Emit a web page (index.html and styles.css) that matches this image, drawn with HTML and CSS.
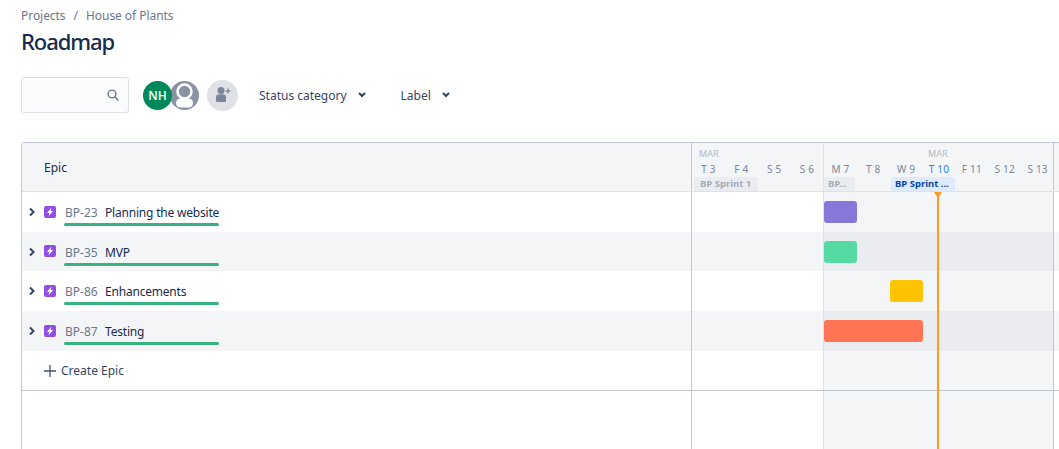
FILE: index.html
```html
<!DOCTYPE html>
<html>
	<head>
		<title>Roadmap</title>
		<link rel="stylesheet" href="styles.css">
	</head>
	<body>
		<div class="crumbs"><span>Projects</span><span class="slash">/</span><span>House of Plants</span></div>
		<h1>Roadmap</h1>
		<div class="toolbar">
			<div class="search">
				<svg width="16" height="16" viewBox="0 0 16 16"><circle cx="7" cy="7" r="3.9" fill="none" stroke="#6b778c" stroke-width="1.4"/><path d="M10 10l3 3" stroke="#6b778c" stroke-width="1.5" stroke-linecap="round"/></svg>
			</div>
			<div class="avatars">
				<div class="avatar nh">NH</div>
				<div class="avatar anon">
					<svg width="29" height="29" viewBox="0 0 29 29"><circle cx="14.5" cy="10.500" r="7" fill="none" stroke="#fff" stroke-width="2.500"/><path d="M6 22c0-3 2-4.500 4.500-4.500h8c2.500 0 4.500 1.500 4.500 4.500 0 3-2 4.500-4.500 4.500h-8C8 26.500 6 25 6 22z" fill="#fff"/></svg>
				</div>
			</div>
			<div class="avatar add">
				<svg width="20" height="20" viewBox="0 0 20 20"><circle cx="8" cy="5.500" r="3.500" fill="#7a869a"/><path d="M3 12c0-1.700 1.200-2.700 2.800-2.700h4.400c1.600 0 2.800 1 2.800 2.700v3.500c0 1-.8 1.500-1.700 1.500H4.700C3.800 17 3 16.500 3 15.500z" fill="#7a869a"/><path d="M15 3.500v5M12.500 6h5" stroke="#7a869a" stroke-width="1.300"/></svg>
			</div>
			<div class="filter first">Status category<svg width="10" height="8" viewBox="0 0 10 8"><path d="M2 2l3 3 3-3" fill="none" stroke="#344563" stroke-width="2"/></svg></div>
			<div class="filter">Label<svg width="10" height="8" viewBox="0 0 10 8"><path d="M2 2l3 3 3-3" fill="none" stroke="#344563" stroke-width="2"/></svg></div>
		</div>

		<div class="roadmap">
			<div class="row head">
				<div class="label">Epic</div>
				<div class="wk past">
					<div class="month">MAR</div>
					<div class="days"><span>T 3</span><span>F 4</span><span>S 5</span><span>S 6</span></div>
					<div class="sprints"><span class="sprint s1">BP Sprint 1</span></div>
				</div>
				<div class="wk now">
					<div class="month center">MAR</div>
					<div class="days"><span>M 7</span><span>T 8</span><span>W 9</span><span class="today">T 10</span><span>F 11</span><span>S 12</span><span>S 13</span></div>
					<div class="sprints"><span class="sprint s2">BP...</span><span class="sprint s3">BP Sprint ...</span></div>
				</div>
				<div class="wk next"></div>
			</div>

			<div class="row epic">
				<div class="label">
					<svg class="caret" width="8" height="10" viewBox="0 0 8 10"><path d="M2 1.500L5.500 5 2 8.500" fill="none" stroke="#344563" stroke-width="2"/></svg>
					<svg class="type" width="12" height="12" viewBox="0 0 12 12"><rect width="12" height="12" rx="2" fill="#904ee2"/><path d="M7.500 1.500L3 7h2.500l-1 3.500L9 5H6.500z" fill="#fff"/></svg>
					<div class="issue"><div class="names"><span class="key">BP-23</span><span>Planning the website</span></div><div class="progress"></div></div>
				</div>
				<div class="wk past"></div>
				<div class="wk now"><div class="bar purple"></div></div>
				<div class="wk next"></div>
			</div>
			<div class="row epic alt short">
				<div class="label">
					<svg class="caret" width="8" height="10" viewBox="0 0 8 10"><path d="M2 1.500L5.500 5 2 8.500" fill="none" stroke="#344563" stroke-width="2"/></svg>
					<svg class="type" width="12" height="12" viewBox="0 0 12 12"><rect width="12" height="12" rx="2" fill="#904ee2"/><path d="M7.500 1.500L3 7h2.500l-1 3.500L9 5H6.500z" fill="#fff"/></svg>
					<div class="issue"><div class="names"><span class="key">BP-35</span><span>MVP</span></div><div class="progress"></div></div>
				</div>
				<div class="wk past"></div>
				<div class="wk now"><div class="bar green"></div></div>
				<div class="wk next"></div>
			</div>
			<div class="row epic">
				<div class="label">
					<svg class="caret" width="8" height="10" viewBox="0 0 8 10"><path d="M2 1.500L5.500 5 2 8.500" fill="none" stroke="#344563" stroke-width="2"/></svg>
					<svg class="type" width="12" height="12" viewBox="0 0 12 12"><rect width="12" height="12" rx="2" fill="#904ee2"/><path d="M7.500 1.500L3 7h2.500l-1 3.500L9 5H6.500z" fill="#fff"/></svg>
					<div class="issue"><div class="names"><span class="key">BP-86</span><span>Enhancements</span></div><div class="progress"></div></div>
				</div>
				<div class="wk past"></div>
				<div class="wk now"><div class="bar yellow"></div></div>
				<div class="wk next"></div>
			</div>
			<div class="row epic alt">
				<div class="label">
					<svg class="caret" width="8" height="10" viewBox="0 0 8 10"><path d="M2 1.500L5.500 5 2 8.500" fill="none" stroke="#344563" stroke-width="2"/></svg>
					<svg class="type" width="12" height="12" viewBox="0 0 12 12"><rect width="12" height="12" rx="2" fill="#904ee2"/><path d="M7.500 1.500L3 7h2.500l-1 3.500L9 5H6.500z" fill="#fff"/></svg>
					<div class="issue"><div class="names"><span class="key">BP-87</span><span>Testing</span></div><div class="progress"></div></div>
				</div>
				<div class="wk past"></div>
				<div class="wk now"><div class="bar red"></div></div>
				<div class="wk next"></div>
			</div>

			<div class="row create">
				<div class="label">
					<svg width="12" height="12" viewBox="0 0 12 12"><path d="M6 0v12M0 6h12" stroke="#42526e" stroke-width="1.300"/></svg>
					<span>Create Epic</span>
				</div>
				<div class="wk past"></div>
				<div class="wk now"></div>
				<div class="wk next"></div>
			</div>
			<div class="row rest">
				<div class="label"></div>
				<div class="wk past"></div>
				<div class="wk now"></div>
				<div class="wk next"></div>
			</div>

			<div class="todayline"></div>
		</div>
	</body>
</html>
```

FILE: styles.css
```css
* {
	box-sizing: border-box;
}
html,body {
	width: 100%;
	height: 100%;
	overflow: hidden;
}
body {
	margin: 0;
	padding: 8px 0 0 21px;
	background-color: #fff;
	color: #172b4d;
	font-family: "Noto Sans", sans-serif;
	font-size: 12px;
}
.crumbs {
	display: flex;
	height: 16px;
	line-height: 16px;
	color: #6b778c;
	font-size: 12px;
	letter-spacing: -.05px;
}
.slash {
	margin: 0 8px;
}
h1 {
	margin: 1px 0 0;
	height: 32px;
	line-height: 32px;
	font-size: 22px;
	font-weight: 500;
	letter-spacing: -1.1px;
	color: #172b4d;
}
.toolbar {
	display: flex;
	align-items: center;
	margin-top: 20px;
	height: 36px;
}
.search {
	display: flex;
	align-items: center;
	justify-content: flex-end;
	width: 108px;
	height: 36px;
	padding-right: 7px;
	background-color: #fafbfc;
	border: 1px solid #dfe1e6;
	border-radius: 3px;
}
.avatars {
	display: flex;
	margin-left: 14px;
}
.avatar {
	display: flex;
	align-items: center;
	justify-content: center;
	width: 29px;
	height: 29px;
	border-radius: 50%;
}
.nh {
	position: relative;
	background-color: #00875a;
	color: #e3fcef;
	font-size: 12px;
	font-weight: 600;
}
.anon {
	margin-left: -2px;
	background-color: #8993a4;
	overflow: hidden;
}
.add {
	width: 31px;
	height: 31px;
	margin-left: 8px;
	background-color: #dfe1e6;
}
.filter {
	display: flex;
	align-items: center;
	color: #344563;
	font-size: 12px;
	margin-left: 34px;
}
.filter.first {
	margin-left: 21px;
}
.filter svg {
	margin-left: 10px;
}

.roadmap {
	position: relative;
	margin-top: 29px;
	width: 1038px;
	border-top: 1px solid #c1c7d0;
	border-left: 1px solid #c1c7d0;
	border-top-left-radius: 3px;
}
.row {
	display: flex;
	height: 40px;
}
.row.short {
	height: 39px;
}
.label {
	flex: none;
	display: flex;
	align-items: center;
	width: 670px;
	border-right: 1px solid #c1c7d0;
}
.wk {
	flex: none;
}
.past {
	width: 131px;
}
.now {
	width: 231px;
	background-color: #f4f5f7;
	border-left: 1px solid #dfe1e6;
	border-right: 1px solid #c1c7d0;
}
.next {
	flex: 1;
}

.head {
	height: 49px;
	background-color: #f4f5f7;
	border-bottom: 1px solid #dfe1e6;
}
.head .label {
	padding-left: 22px;
	font-size: 12px;
	color: #172b4d;
}
.head .wk {
	padding-top: 5px;
	background-color: #f4f5f7;
}
.month {
	height: 12px;
	line-height: 12px;
	padding-left: 7px;
	font-size: 9px;
	color: #b3bac5;
}
.month.center {
	padding-left: 104px;
}
.days {
	display: flex;
	height: 16px;
	line-height: 16px;
	margin-top: 1px;
	font-size: 10px;
	color: #7a869a;
	letter-spacing: .2px;
}
.days span {
	flex: 0 0 32.86px;
	text-align: center;
	white-space: nowrap;
}
.days .today {
	color: #2684ff;
}
.sprints {
	display: flex;
	height: 14px;
}
.sprint {
	height: 14px;
	line-height: 14px;
	padding-left: 6px;
	border-radius: 3px 3px 0 0;
	font-size: 9.5px;
	font-weight: 700;
	white-space: nowrap;
	overflow: hidden;
	background-color: #ebecf0;
	color: #a5adba;
}
.s1 {
	width: 64px;
	margin-left: 2px;
}
.s2 {
	width: 31px;
	margin-left: 0;
	padding-left: 4px;
}
.s3 {
	width: 64px;
	margin-left: 36px;
	padding-left: 4px;
	background-color: #deebff;
	color: #0747a6;
}

.epic .label {
	padding-left: 6px;
}
.caret {
	flex: none;
}
.type {
	flex: none;
	margin-left: 8px;
	margin-top: -1px;
}
.issue {
	margin-left: 8px;
	padding-top: 6px;
}
.names {
	display: flex;
	height: 18px;
	line-height: 18px;
	font-size: 12px;
	color: #172b4d;
	white-space: nowrap;
	letter-spacing: -.2px;
}
.key {
	width: 41px;
	padding-left: 1px;
	color: #6b778c;
	letter-spacing: 0;
}
.progress {
	width: 155px;
	height: 3px;
	margin-top: 1px;
	background-color: #36b37e;
	border-radius: 2px;
}
.alt .label,
.alt .past,
.alt .next {
	background-color: #f4f5f7;
}
.alt .now {
	background-color: #ebecf0;
}
.bar {
	height: 22px;
	margin-top: 9px;
	border-radius: 3px;
}
.purple {
	width: 33px;
	background-color: #8777d9;
}
.green {
	width: 33px;
	background-color: #57d9a3;
}
.yellow {
	width: 33px;
	margin-left: 66px;
	background-color: #ffc400;
}
.red {
	width: 99px;
	background-color: #ff7452;
}

.create {
	border-bottom: 1px solid #c1c7d0;
}
.create .label {
	padding-left: 22px;
	color: #344563;
}
.create .label span {
	margin-left: 5px;
}
.rest {
	height: 60px;
}

/* today marker sits over the rows */
.todayline {
	position: absolute;
	top: 49px;
	left: 915px;
	bottom: 0;
	width: 2px;
	background-color: #ff991f;
}
.todayline::before {
	content: "";
	position: absolute;
	top: 0;
	left: -3px;
	border-left: 4px solid transparent;
	border-right: 4px solid transparent;
	border-top: 6px solid #ff991f;
}
```
